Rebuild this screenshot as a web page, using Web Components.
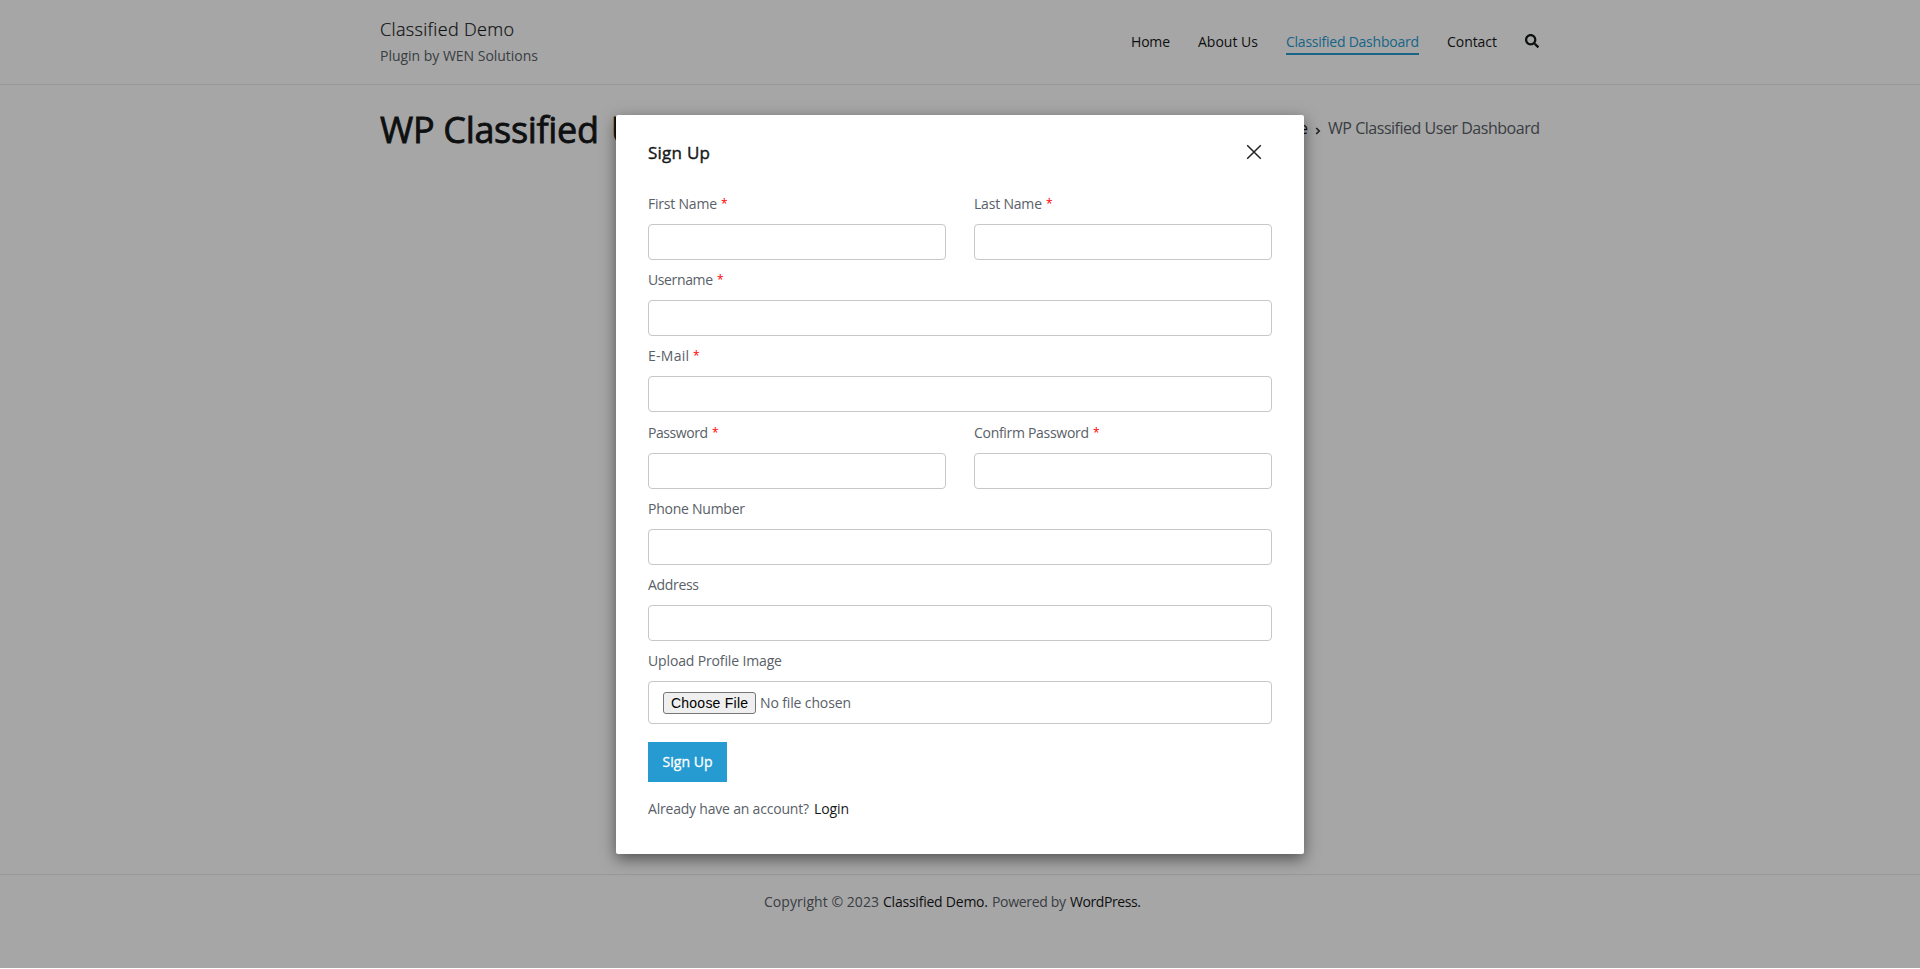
<!DOCTYPE html>
<html lang="en"><head><meta charset="utf-8"><title>WP Classified User Dashboard</title>
<style>
html,body{margin:0;height:100%;overflow:hidden;background:#fff}
body{font-family:"Open Sans","Noto Sans",sans-serif;font-size:14px;line-height:20px;color:#596067}
</style></head><body>
<classified-page></classified-page>
<script>
const define=(name,html,setup)=>customElements.define(name,class extends HTMLElement{
  connectedCallback(){
    if(this.shadowRoot)return;
    const t=document.createElement('template');t.innerHTML=html;
    this.attachShadow({mode:'open'}).append(t.content.cloneNode(true));
    if(setup)setup(this,this.shadowRoot);
  }
});

// A run of text tracked out to a given measure.
define('tracked-text','<style>:host{display:inline-block;white-space:pre}span{display:inline-block;white-space:pre}</style><span><slot></slot></span>',(el,root)=>{
  const span=root.querySelector('span'),w=+el.getAttribute('w'),n=[...el.textContent].length;
  el.style.width=w+'px';
  span.style.letterSpacing='0px';
  const gap=(w-span.getBoundingClientRect().width)/(n-1);
  span.style.letterSpacing=gap.toFixed(3)+'px';
});

define('site-header',`<style>
:host{display:block;height:84px;border-bottom:1px solid #eaeaea}
.in{width:1160px;margin:0 auto;display:flex;justify-content:space-between}
.brand{padding-top:17px}
.name{font-size:18px;line-height:25px;font-weight:300;color:#16181a;-webkit-text-stroke:.2px #16181a;height:25px}
.tag{height:20px;margin-top:4px}
nav{display:flex;gap:28px;padding-top:32px;color:#16181a}
nav tracked-text{height:21px}
.on{color:#269bd1;border-bottom:2px solid #269bd1}
svg{width:14px;height:14px;margin-top:2px;margin-right:1px;display:block}
</style><div class="in"><div class="brand"><div class="name"><tracked-text w="134">Classified Demo</tracked-text></div><div class="tag"><tracked-text w="158">Plugin by WEN Solutions</tracked-text></div></div>
<nav><tracked-text w="39">Home</tracked-text><tracked-text w="60">About Us</tracked-text><tracked-text class="on" w="133">Classified Dashboard</tracked-text><tracked-text w="50">Contact</tracked-text>
<svg viewBox="0 0 512 512"><path fill="#16181a" d="M505 442.700 405.300 343c-4.500-4.500-10.600-7-17-7H372c27.600-35.300 44-79.700 44-128C416 93.100 322.900 0 208 0S0 93.100 0 208s93.100 208 208 208c48.300 0 92.700-16.400 128-44v16.300c0 6.400 2.500 12.500 7 17l99.700 99.700c9.400 9.400 24.600 9.400 33.900 0l28.300-28.300c9.400-9.400 9.400-24.600.1-34zM208 336c-70.700 0-128-57.200-128-128 0-70.700 57.200-128 128-128 70.700 0 128 57.200 128 128 0 70.700-57.200 128-128 128z"/></svg></nav></div>`);

define('page-title',`<style>
:host{display:flex;width:1160px;margin:0 auto;justify-content:space-between;flex:1}
h1{margin:0;padding-top:20px;font-size:36px;line-height:50px;font-weight:500;color:#16181a;-webkit-text-stroke:.8px #16181a;display:flex;gap:12px}
.crumb{display:flex;padding-top:32px;font-size:16px;line-height:22px}
.crumb .h{color:#16181a;margin-right:7px}svg{width:6px;height:8px;margin:10px 7px 0 0}
</style><h1><tracked-text w="219">WP Classified</tracked-text><tracked-text w="254">User Dashboard</tracked-text></h1>
<div class="crumb"><tracked-text class="h" w="44">Home</tracked-text><svg viewBox="0 0 6 8"><path d="M1.200 1l3 3-3 3" fill="none" stroke="#30353a" stroke-width="1.700"/></svg><tracked-text w="212">WP Classified User Dashboard</tracked-text></div>`);

define('site-footer',`<style>
:host{display:flex;height:94px;border-top:1px solid #eaeaea;gap:4px;box-sizing:border-box;padding:17px 0 0 764px}
b{font-weight:400;color:#16181a}
</style><tracked-text w="115">Copyright © 2023</tracked-text><b><tracked-text w="105">Classified Demo.</tracked-text></b><tracked-text w="74">Powered by</tracked-text><b><tracked-text w="71">WordPress.</tracked-text></b>`);

define('form-field',`<style>
:host{display:block;flex:1;height:76.200px}
.l{display:flex;gap:4px;height:30px}
.l i{font-style:normal;font-size:12px;line-height:19px;color:#f00}
.box{box-sizing:border-box;height:36px;border:1px solid #c7c7c7;border-radius:4px;display:flex;align-items:center}
:host([file]){height:91px}
:host([file]) .box{height:43px;padding-left:14px}
.b{box-sizing:border-box;width:93px;height:22px;border:1px solid #767676;border-radius:3px;background:#efefef;color:#000;font:14px/20px "Liberation Sans",Arial,sans-serif;padding-left:7px;margin-right:4px}
</style><div class="l"></div><div class="box"></div>`,(el,r)=>{
  r.querySelector('.l').innerHTML='<tracked-text w="'+el.getAttribute('w')+'">'+el.getAttribute('label')+'</tracked-text>'+(el.hasAttribute('required')?'<i>*</i>':'');
  if(el.hasAttribute('file'))r.querySelector('.box').innerHTML='<span class="b"><tracked-text w="77">Choose File</tracked-text></span><tracked-text w="91">No file chosen</tracked-text>';
});

define('sign-up-dialog',`<style>
:host{display:block;box-sizing:border-box;width:688px;height:739px;background:#fff;border-radius:2px;padding:0 32px;box-shadow:0 5px 15px rgba(0,0,0,.5)}
header{display:flex;justify-content:space-between;height:79px;color:#16181a}
h2{margin:0;padding-top:26px;font-size:17px;line-height:24px;font-weight:500;-webkit-text-stroke:.4px #16181a}
header svg{width:16px;height:16px;margin:29px 10px 0 0}
.row{display:flex;gap:28px}
button{display:block;border:0;padding:0 0 1px;margin:0;width:79px;height:40px;background:#269bd1;color:#fff;font:500 14px/20px "Open Sans","Noto Sans",sans-serif;-webkit-text-stroke:.3px #fff}
.alt{display:flex;gap:5px;margin-top:17px}.alt b{font-weight:400;color:#16181a}
</style><header><h2><tracked-text w="62">Sign Up</tracked-text></h2><svg viewBox="0 0 16 16"><path d="M1.200 1.200l13.600 13.600M14.800 1.200L1.200 14.800" stroke="#222" stroke-width="1.500"/></svg></header>
<div class="row"><form-field label="First Name" w="69" required></form-field><form-field label="Last Name" w="68" required></form-field></div>
<form-field label="Username" w="65" required></form-field>
<form-field label="E-Mail" w="41" required></form-field>
<div class="row"><form-field label="Password" w="60" required></form-field><form-field label="Confirm Password" w="115" required></form-field></div>
<form-field label="Phone Number" w="97"></form-field>
<form-field label="Address" w="51"></form-field>
<form-field label="Upload Profile Image" w="134" file></form-field>
<button><tracked-text w="50">Sign Up</tracked-text></button>
<div class="alt"><tracked-text w="161">Already have an account?</tracked-text><b><tracked-text w="35">Login</tracked-text></b></div>`);

define('classified-page',`<style>
:host{display:block;height:969px;position:relative}
.page{height:968px;display:flex;flex-direction:column}
.veil{position:absolute;inset:0 0 1px;background:rgba(0,0,0,.35);display:flex;justify-content:center;align-items:flex-start;padding-top:115px}
</style><div class="page"><site-header></site-header><page-title></page-title><site-footer></site-footer></div><div class="veil"><sign-up-dialog></sign-up-dialog></div>`);
</script></body></html>
